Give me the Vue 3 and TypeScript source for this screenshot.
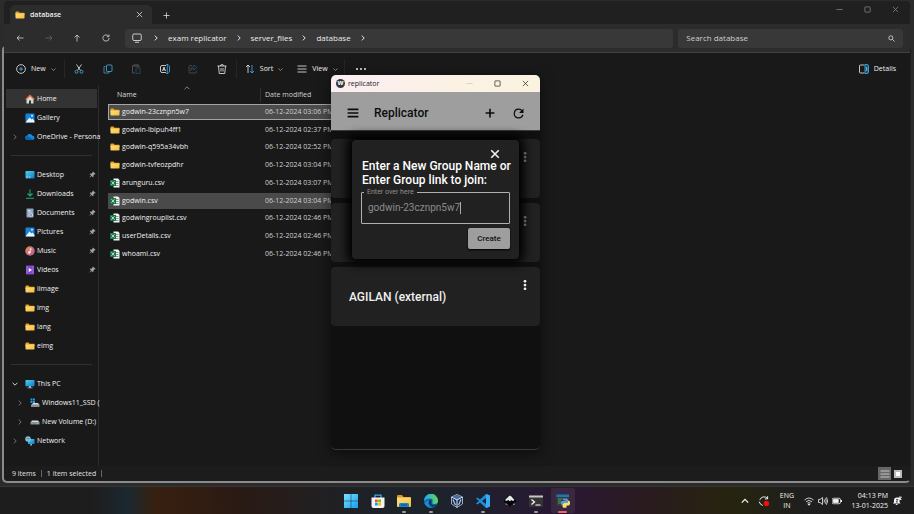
<script setup lang="ts">
import { ref } from 'vue'

interface Place {
  label: string
  icon: string
  arrow?: 'right' | 'down'
  pinned?: boolean
  nested?: boolean
  active?: boolean
}

interface FileRow {
  name: string
  icon: string
  date: string
  state?: string
}

const quick: Place[] = [
  { label: 'Home', icon: 'home', active: true },
  { label: 'Gallery', icon: 'picture' },
  { label: 'OneDrive - Persona', icon: 'cloud', arrow: 'right' },
]

const pinned: Place[] = [
  { label: 'Desktop', icon: 'desktop', pinned: true },
  { label: 'Downloads', icon: 'download', pinned: true },
  { label: 'Documents', icon: 'document', pinned: true },
  { label: 'Pictures', icon: 'picture', pinned: true },
  { label: 'Music', icon: 'music', pinned: true },
  { label: 'Videos', icon: 'video', pinned: true },
  { label: 'iimage', icon: 'folder' },
  { label: 'img', icon: 'folder' },
  { label: 'lang', icon: 'folder' },
  { label: 'eimg', icon: 'folder' },
]

const devices: Place[] = [
  { label: 'This PC', icon: 'pc', arrow: 'down' },
  { label: 'Windows11_SSD (', icon: 'windrive', arrow: 'right', nested: true },
  { label: 'New Volume (D:)', icon: 'drive', arrow: 'right', nested: true },
  { label: 'Network', icon: 'network', arrow: 'right' },
]

const groups = [quick, pinned, devices]

const files: FileRow[] = [
  { name: 'godwin-23cznpn5w7', icon: 'folder', date: '06-12-2024 03:06 PM', state: 'selected' },
  { name: 'godwin-lbipuh4ff1', icon: 'folder', date: '06-12-2024 02:37 PM' },
  { name: 'godwin-q595a34vbh', icon: 'folder', date: '06-12-2024 02:52 PM' },
  { name: 'godwin-tvfeozpdhr', icon: 'folder', date: '06-12-2024 03:04 PM' },
  { name: 'arunguru.csv', icon: 'csv', date: '06-12-2024 03:07 PM' },
  { name: 'godwin.csv', icon: 'csv', date: '06-12-2024 03:04 PM', state: 'hovered' },
  { name: 'godwingrouplist.csv', icon: 'csv', date: '06-12-2024 02:46 PM' },
  { name: 'userDetails.csv', icon: 'csv', date: '06-12-2024 02:46 PM' },
  { name: 'whoami.csv', icon: 'csv', date: '06-12-2024 02:46 PM' },
]

const crumbs = ['exam replicator', 'server_files', 'database']

const navButtons = [
  { label: 'Back', icon: 'back' },
  { label: 'Forward', icon: 'forward' },
  { label: 'Up', icon: 'up' },
  { label: 'Refresh', icon: 'refresh' },
]

const tools = [
  { label: 'Cut', icon: 'cut' },
  { label: 'Copy', icon: 'copy' },
  { label: 'Paste', icon: 'paste' },
  { label: 'Rename', icon: 'rename' },
  { label: 'Share', icon: 'share' },
  { label: 'Delete', icon: 'trash' },
]

const apps = [
  { label: 'Start', icon: 'start', run: '' },
  { label: 'Microsoft Store', icon: 'store', run: '' },
  { label: 'File Explorer', icon: 'explorer', run: 'open' },
  { label: 'Edge', icon: 'edge', run: 'open' },
  { label: 'VirtualBox', icon: 'vbox', run: '' },
  { label: 'Visual Studio Code', icon: 'code', run: 'open' },
  { label: 'Inkscape', icon: 'ink', run: '' },
  { label: 'Terminal', icon: 'terminal', run: 'open' },
  { label: 'Python', icon: 'python', run: 'front' },
]

const cards = ['', '', 'AGILAN (external)']
const groupName = ref('godwin-23cznpn5w7')
const search = ref('')
</script>

<template>
  <svg class="sprite" aria-hidden="true">
    <defs>
      <linearGradient id="gFolder" x1="0" y1="0" x2="1" y2="1"><stop offset="0" stop-color="#ffe08a" /><stop offset="1" stop-color="#f8bd35" /></linearGradient>
      <linearGradient id="gBlue" x1="0" y1="0" x2="1" y2="1"><stop offset="0" stop-color="#48d3ee" /><stop offset="1" stop-color="#1579c4" /></linearGradient>
      <linearGradient id="gWin" x1="0" y1="0" x2="1" y2="1"><stop offset="0" stop-color="#7be0ff" /><stop offset="1" stop-color="#109ff0" /></linearGradient>
      <linearGradient id="gMusic" x1="0" y1="0" x2="1" y2="1"><stop offset="0" stop-color="#e88a5a" /><stop offset="1" stop-color="#b75a92" /></linearGradient>
      <linearGradient id="gEdge" x1="0" y1="0" x2="1" y2="0"><stop offset="0" stop-color="#1fa7e8" /><stop offset="1" stop-color="#62d65b" /></linearGradient>
    </defs>
    <symbol id="i-folder" viewBox="0 0 20 16"><path d="M1 2.500Q1 1 2.500 1H7l2 2.500h9q1 0 1 1V8H1z" fill="#e8a317" /><path d="M1 5h18v8.500q0 1.500-1.500 1.500h-15Q1 15 1 13.500z" fill="url(#gFolder)" /></symbol>
    <symbol id="i-csv" viewBox="0 0 20 20"><path d="M7 1h9l3 3v15H7z" fill="#f2f5f2" /><path d="M10 6h7v2h-7zM12 10h5v2h-5zM12 14h5v2h-5z" fill="#7aa68c" /><path d="M0 4h12v12H0z" fill="#187345" /><path d="M3 6.500l6 7M9 6.500l-6 7" stroke="#dff3e6" stroke-width="1.600" /></symbol>
    <symbol id="i-home" viewBox="0 0 20 20"><path d="M3 9l7-6 7 6v10h-5v-6H8v6H3z" fill="#d5d8dc" /><path d="M1.500 11L10 3l8.500 8" fill="none" stroke="#e2703a" stroke-width="3" stroke-linejoin="round" /></symbol>
    <symbol id="i-picture" viewBox="0 0 20 20"><rect x="1" y="1" width="18" height="18" rx="2" fill="#1683dc" /><path d="M1 19l8-10 4 4 2-2 4 5v3z" fill="#eaf6ff" /><circle cx="14" cy="5.500" r="1.800" fill="#eaf6ff" /></symbol>
    <symbol id="i-cloud" viewBox="0 0 20 20"><path d="M5 16a4.500 4.500 0 01-.5-9A6 6 0 0115 7.500 4.300 4.300 0 0115.500 16z" fill="#168be0" /><path d="M3 8l6 2 8 5-1.500 1H5A4.500 4.500 0 013 8z" fill="#0866b5" /></symbol>
    <symbol id="i-desktop" viewBox="0 0 20 18"><rect x="1" y="1" width="18" height="15" rx="1.500" fill="url(#gBlue)" /><path d="M3 13h3M8 13h3" stroke="#d9f7ff" stroke-width="1.500" /></symbol>
    <symbol id="i-download" viewBox="0 0 20 20"><path d="M10 1v13M5 9l5 5 5-5M2 18.500h16" fill="none" stroke="#23a67f" stroke-width="2.200" /></symbol>
    <symbol id="i-document" viewBox="0 0 20 20"><rect x="3" y="1" width="14" height="18" rx="1.500" fill="#8ca3bb" /><path d="M6 5h5M6 8h7M8 12h7v4H8z" stroke="#e8eef4" stroke-width="1.500" fill="#587795" /></symbol>
    <symbol id="i-music" viewBox="0 0 20 20"><circle cx="10" cy="10" r="9.500" fill="url(#gMusic)" /><circle cx="8.500" cy="13" r="2.300" fill="#fff" /><path d="M10.500 13V5l3 2" stroke="#fff" stroke-width="1.600" fill="none" /></symbol>
    <symbol id="i-video" viewBox="0 0 20 20"><rect x="2" y="1" width="16" height="18" rx="1.500" fill="#8447cf" /><path d="M4 3v14M16 3v14" stroke="#c9a4f2" stroke-width="1.600" stroke-dasharray="2 2" /><path d="M7.500 6l6.500 4-6.500 4z" fill="#fff" /></symbol>
    <symbol id="i-pc" viewBox="0 0 20 18"><rect x="1" y="1" width="18" height="12.500" rx="1" fill="url(#gBlue)" /><path d="M8 13h4v3h3v1.500H5V16h3z" fill="#8eb9cf" /></symbol>
    <symbol id="i-drive" viewBox="0 0 20 20"><path d="M4 7h12l3 4H1z" fill="#d7dadd" /><rect x="1" y="10" width="18" height="5" rx="1" fill="#8b8f92" /><path d="M13 12.500h4" stroke="#87ef9b" stroke-width="1.400" /></symbol>
    <symbol id="i-windrive" viewBox="0 0 20 20"><path d="M1 1h4v4H1zM6 1h4v4H6zM1 6h4v4H1zM6 6h4v4H6z" fill="#1c9cf0" /><path d="M6 10h10l3 4H3z" fill="#d7dadd" /><rect x="2" y="13" width="17" height="5" rx="1" fill="#8b8f92" /></symbol>
    <symbol id="i-network" viewBox="0 0 20 20"><rect x="6" y="6" width="13" height="10" rx="1" fill="url(#gBlue)" /><path d="M11 16h3v3h-4z" fill="#8eb9cf" /><circle cx="6" cy="6" r="5.500" fill="#8fc5de" /><path d="M2 5h8M6 1v10" stroke="#3f7ea0" /></symbol>
    <symbol id="i-pin" viewBox="0 0 16 16"><path d="M9 1l6 6-1.500 1-1-.3-2.500 2.500.3 3L9 14.500 5.800 11.300 2 15l-1-1 3.800-3.800L1.500 7l1.300-1.300 3 .3 2.500-2.500L8 2.300z" fill="#9ba4ad" /></symbol>
    <symbol id="i-back" viewBox="0 0 16 16"><path d="M15 8H2M7 3L2 8l5 5" /></symbol>
    <symbol id="i-forward" viewBox="0 0 16 16"><path d="M1 8h13M9 3l5 5-5 5" /></symbol>
    <symbol id="i-up" viewBox="0 0 16 16"><path d="M8 15V2M3 7l5-5 5 5" /></symbol>
    <symbol id="i-refresh" viewBox="0 0 16 16"><path d="M13.500 5A6.300 6.300 0 108 14.300 6.300 6.300 0 0014.300 8M14 1v4.300H9.700" /></symbol>
    <symbol id="i-monitor" viewBox="0 0 20 20"><rect x="1.500" y="2" width="17" height="13" rx="2.500" /><path d="M6 18.500h8" /></symbol>
    <symbol id="i-right" viewBox="0 0 10 10"><path d="M3 1l4 4-4 4" /></symbol>
    <symbol id="i-down" viewBox="0 0 10 10"><path d="M1 3l4 4 4-4" /></symbol>
    <symbol id="i-caret" viewBox="0 0 10 10"><path d="M1 7l4-4 4 4" /></symbol>
    <symbol id="i-close" viewBox="0 0 16 16"><path d="M2 2l12 12M14 2L2 14" /></symbol>
    <symbol id="i-plus" viewBox="0 0 16 16"><path d="M8 1v14M1 8h14" /></symbol>
    <symbol id="i-min" viewBox="0 0 16 16"><path d="M1 8h14" /></symbol>
    <symbol id="i-max" viewBox="0 0 16 16"><rect x="2" y="2" width="12" height="12" rx="1" /></symbol>
    <symbol id="i-search" viewBox="0 0 16 16"><circle cx="6.500" cy="6.500" r="4.700" /><path d="M10 10l5 5" /></symbol>
    <symbol id="i-new" viewBox="0 0 20 20"><circle cx="10" cy="10" r="8.700" /><path d="M10 6v8M6 10h8" stroke="#55b9ee" /></symbol>
    <symbol id="i-cut" viewBox="0 0 20 20"><path d="M5 1l8 12M15 1L7 13" /><g stroke="#45b3ec"><circle cx="5" cy="15.500" r="3" /><circle cx="15" cy="15.500" r="3" /></g></symbol>
    <symbol id="i-copy" viewBox="0 0 20 20"><path d="M5 5H2v13h10v-3" stroke="#4a93bd" /><rect x="7" y="2" width="11" height="13" rx="1.500" stroke="#45b3ec" /></symbol>
    <symbol id="i-paste" viewBox="0 0 20 20"><path d="M8 18H3V3h3M14 3h2v4M6 1.500h8v3H6z" stroke="#5c5c5c" /><rect x="10" y="8" width="8" height="11" rx="1" stroke="#2b5369" /></symbol>
    <symbol id="i-rename" viewBox="0 0 20 20"><path d="M12 3H4Q1 3 1 6v8q0 3 3 3h8" /><path d="M17 3q2 0 2 3v8q0 3-2 3M14.500 1v18M12.500 1h4M12.500 19h4" stroke="#45b3ec" /><path d="M5 14L8 6l3 8M6 11.500h4" /></symbol>
    <symbol id="i-share" viewBox="0 0 20 20"><path d="M8 3H4Q2 3 2 5v11q0 2 2 2h11q2 0 2-2v-2" stroke="#505050" /><path d="M12 2l6 5-6 5V9q-5 0-7 4 0-8 7-8z" stroke="#2b5369" /></symbol>
    <symbol id="i-trash" viewBox="0 0 20 20"><path d="M1 4h18M7 4q0-3 3-3t3 3M3 4l1.500 15h11L17 4M8 8v7M12 8v7" /></symbol>
    <symbol id="i-sort" viewBox="0 0 20 20"><path d="M6 18V2M2 6l4-4 4 4" /><path d="M14 2v16M10 14l4 4 4-4" stroke="#45b3ec" /></symbol>
    <symbol id="i-lines" viewBox="0 0 20 20"><path d="M1 4h18M1 10h18M1 16h18" /></symbol>
    <symbol id="i-details" viewBox="0 0 20 20"><path d="M11 2H3Q1 2 1 4v12q0 2 2 2h8" /><path d="M12 1h4q3 0 3 3v12q0 3-3 3h-4z" fill="#174d6c" stroke="#45b3ec" /><path d="M15.500 6v8" stroke="#9edcff" /></symbol>
    <symbol id="i-more" viewBox="0 0 20 20"><g fill="currentColor" stroke="none"><circle cx="2" cy="10" r="2" /><circle cx="10" cy="10" r="2" /><circle cx="18" cy="10" r="2" /></g></symbol>
    <symbol id="i-kebab" viewBox="0 0 24 24"><g fill="currentColor" stroke="none"><circle cx="12" cy="3" r="3.300" /><circle cx="12" cy="12" r="3.300" /><circle cx="12" cy="21" r="3.300" /></g></symbol>
    <symbol id="i-reload" viewBox="0 0 24 24"><path d="M17.650 6.350A7.960 7.960 0 0012 4a8 8 0 108 10h-2.100A6 6 0 1112 6c1.660 0 3.140.690 4.220 1.780L13 11h7V4z" fill="currentColor" stroke="none" /></symbol>
    <symbol id="i-start" viewBox="0 0 28 28"><path d="M0 0h13.500v13.500H0zM14.500 0H28v13.500H14.500zM0 14.500h13.500V28H0zM14.500 14.500H28V28H14.500z" fill="url(#gWin)" /></symbol>
    <symbol id="i-store" viewBox="0 0 28 28"><path d="M8 8V2h12v6" fill="none" stroke="#35aee8" stroke-width="2.500" /><path d="M1 7h26v17q0 4-4 4H5q-4 0-4-4z" fill="#f3f3f3" /><path d="M8 11h5.500v5.500H8z" fill="#f25022" /><path d="M14.500 11H20v5.500h-5.500z" fill="#7fba00" /><path d="M8 17.500h5.500V23H8z" fill="#00a4ef" /><path d="M14.500 17.500H20V23h-5.500z" fill="#ffb900" /></symbol>
    <symbol id="i-explorer" viewBox="0 0 28 28"><path d="M0 4q0-2 2-2h8l3 4h13q2 0 2 2v6H0z" fill="#dc9814" /><path d="M0 7h28v17q0 2-2 2H2q-2 0-2-2z" fill="url(#gFolder)" /><path d="M4 26v-5q0-3 3-3h14q3 0 3 3v5z" fill="#1685c9" /><path d="M8 22h12" stroke="#0b4f87" stroke-width="2" /></symbol>
    <symbol id="i-edge" viewBox="0 0 28 28"><circle cx="14" cy="14" r="14" fill="#0c64b6" /><path d="M0 14a14 14 0 0128-1q0 7-7 7-6 0-4-4 2-7-5-7Q4 9 0 14z" fill="url(#gEdge)" /><path d="M10 13q-2 9 6 12 6 1 10-4-12 4-12-5l2-3z" fill="#16304a" /><path d="M10 13q-3 10 7 14-11 2-16-8 2-7 9-6z" fill="#138bd7" /></symbol>
    <symbol id="i-vbox" viewBox="0 0 28 28"><path d="M14 1l11 5v14l-11 7L3 20V6z" fill="#14294d" stroke="#c5d4e6" stroke-width="1.500" /><path d="M4 6l10 6 10-6-10-4z" fill="#4b6f9f" /><path d="M3 6l11 6 11-6M14 12v15" fill="none" stroke="#dde6f0" stroke-width="2" /><path d="M6 11l3 7 2 4M22 11l-3 7-2 4" fill="none" stroke="#b5c9e2" stroke-width="2.500" /></symbol>
    <symbol id="i-code" viewBox="0 0 28 28"><path d="M20 0l8 3v22l-8 3L8 17l-5 4-3-2 6-5-6-5 3-2 5 4zM20 8l-8 6 8 6z" fill="#1690dc" fill-rule="evenodd" /><path d="M20 0l8 3v22l-8 3z" fill="#36aaf2" /></symbol>
    <symbol id="i-ink" viewBox="0 0 28 28"><path d="M14 2q2 0 4 2l8 9q2 3-1 4l-6 1 2 3-5 1-2 4-3-4-5-1 3-3-6-1q-3-1-1-4l8-9q2-2 4-2z" fill="#050505" /><path d="M14 3q1 0 3 2l6 7-3 2-4-2-2 3-3-3-5 2-2-2 7-7q2-2 3-2z" fill="#e5e9ec" /><path d="M5 20l4 1M20 21l4-1" stroke="#ccc" stroke-width="1.500" /></symbol>
    <symbol id="i-terminal" viewBox="0 0 28 28"><rect y="3" width="28" height="23" rx="2" fill="#343434" /><path d="M0 3h28v4H0z" fill="#c5c5c5" /><path d="M5 11l6 5-6 5M13 22h10" fill="none" stroke="#fff" stroke-width="2.400" /></symbol>
    <symbol id="i-python" viewBox="0 0 28 28"><rect x="1" y="1" width="25" height="23" fill="#353b40" /><path d="M1 1h25v5H1z" fill="#1e76b5" /><path d="M4 10h8M4 14h6M4 18h8" stroke="#4aa254" stroke-width="2" /><path d="M13 9h8q3 0 3 4v5h-8q-3 0-3 4h-2q-3-8 2-8h7v-1h-5z" fill="#5b9fd4" /><path d="M24 13q5 0 4 7-1 3-4 3h-3v4q-8 2-8-2v-4q0-3 4-3h7z" fill="#ffdf6b" /></symbol>
    <symbol id="i-wifi" viewBox="0 0 20 20"><path d="M1 8q9-8 18 0M4 11.500q6-5.500 12 0M7 14.500q3-3 6 0" /><circle cx="10" cy="17" r="1.300" fill="currentColor" /></symbol>
    <symbol id="i-sound" viewBox="0 0 20 20"><path d="M1 7h3l5-4v14l-5-4H1zM12 7q2 3 0 6M14.500 4.500q4 5.500 0 11M17 2.500q4.500 7.500 0 15" /></symbol>
    <symbol id="i-battery" viewBox="0 0 20 20"><rect x="0" y="4.500" width="17" height="11" rx="3" /><path d="M2.500 7h10v6h-10z" fill="currentColor" /><path d="M19 8v4" stroke-width="2" /></symbol>
    <symbol id="i-sync" viewBox="0 0 20 20"><path d="M16 6A7.500 7.500 0 003 8M16 2v4.500h-4.500M2 11q1 5 6 6.500" /><circle cx="14" cy="14" r="4.500" fill="#f40f0f" stroke="none" /></symbol>
    <symbol id="i-bell" viewBox="0 0 20 20"><path d="M2 15l2-3V8q0-5 6-5h7v4q-2 0-2 2v3l2 3zM7 16q2 4 5 0z" fill="currentColor" stroke="none" /><path d="M8 7h4l-4 5h4" stroke="#333" /><path d="M14 2h5l-4 5h4" /></symbol>
  </svg>

  <div class="screen">
    <main class="workspace">
      <div class="behind"></div>
      <section class="explorer">
        <header class="tabs">
          <div class="tab">
            <svg class="ic s10"><use href="#i-folder" /></svg>
            <span class="tab-name">database</span>
            <button class="plain" aria-label="Close tab"><svg class="ic line s7"><use href="#i-close" /></svg></button>
          </div>
          <button class="plain add" aria-label="New tab"><svg class="ic line s7"><use href="#i-plus" /></svg></button>
          <div class="win-buttons">
            <button class="plain" aria-label="Minimise"><svg class="ic line s7"><use href="#i-min" /></svg></button>
            <button class="plain" aria-label="Maximise"><svg class="ic line s7"><use href="#i-max" /></svg></button>
            <button class="plain" aria-label="Close"><svg class="ic line s7"><use href="#i-close" /></svg></button>
          </div>
        </header>

        <nav class="navbar">
          <div class="nav-buttons">
            <button v-for="b in navButtons" :key="b.icon" class="plain" :class="b.icon" :aria-label="b.label">
              <svg class="ic line s8"><use :href="'#i-' + b.icon" /></svg>
            </button>
          </div>
          <div class="address">
            <svg class="ic line s10 device"><use href="#i-monitor" /></svg>
            <svg class="ic line s6"><use href="#i-right" /></svg>
            <template v-for="c in crumbs" :key="c">
              <a href="#">{{ c }}</a>
              <svg class="ic line s6"><use href="#i-right" /></svg>
            </template>
          </div>
          <label class="search">
            <input v-model="search" type="text" placeholder="Search database" aria-label="Search database" />
            <svg class="ic line s7"><use href="#i-search" /></svg>
          </label>
        </nav>

        <div class="toolbar">
          <button class="plain menu new"><svg class="ic line s10"><use href="#i-new" /></svg>New<svg class="ic line s5"><use href="#i-down" /></svg></button>
          <div class="tools">
            <button v-for="t in tools" :key="t.icon" class="plain" :aria-label="t.label">
              <svg class="ic line s10"><use :href="'#i-' + t.icon" /></svg>
            </button>
          </div>
          <button class="plain menu sort"><svg class="ic line s10"><use href="#i-sort" /></svg>Sort<svg class="ic line s5"><use href="#i-down" /></svg></button>
          <button class="plain menu view"><svg class="ic line s10"><use href="#i-lines" /></svg>View<svg class="ic line s5"><use href="#i-down" /></svg></button>
          <button class="plain more" aria-label="See more"><svg class="ic line s10"><use href="#i-more" /></svg></button>
          <button class="plain menu details"><svg class="ic line s10"><use href="#i-details" /></svg>Details</button>
        </div>

        <div class="body">
          <aside class="places">
            <ul v-for="(g, i) in groups" :key="i">
              <li v-for="p in g" :key="p.label" :class="{ active: p.active, nested: p.nested }">
                <span class="arrow"><svg v-if="p.arrow" class="ic line s6" :class="p.arrow"><use :href="'#i-' + p.arrow" /></svg></span>
                <svg class="ic s10"><use :href="'#i-' + p.icon" /></svg>
                <span class="place">{{ p.label }}</span>
                <svg v-if="p.pinned" class="ic s7"><use href="#i-pin" /></svg>
              </li>
            </ul>
          </aside>

          <div class="files">
            <table>
              <thead>
                <tr>
                  <th class="name">Name<svg class="ic line s6 asc"><use href="#i-caret" /></svg></th>
                  <th class="date">Date modified</th>
                </tr>
              </thead>
              <tbody>
                <tr v-for="f in files" :key="f.name" :class="f.state">
                  <td class="name"><span class="file"><svg class="ic s10"><use :href="'#i-' + f.icon" /></svg>{{ f.name }}</span></td>
                  <td class="date">{{ f.date }}</td>
                </tr>
              </tbody>
            </table>
          </div>
        </div>

        <footer class="status">
          <span>9 items</span>
          <span>1 item selected</span>
          <div class="modes">
            <button class="plain on" aria-label="Details view"><svg class="ic line s10"><use href="#i-lines" /></svg></button>
            <button class="plain" aria-label="Large icons"><i class="thumb"></i></button>
          </div>
        </footer>
      </section>

      <section class="replicator">
        <header class="titlebar">
          <span class="logo">w</span>
          <span class="title">replicator</span>
          <button class="plain dim" aria-label="Minimise"><svg class="ic line s7"><use href="#i-min" /></svg></button>
          <button class="plain" aria-label="Maximise"><svg class="ic line s7"><use href="#i-max" /></svg></button>
          <button class="plain" aria-label="Close"><svg class="ic line s7"><use href="#i-close" /></svg></button>
        </header>
        <div class="appbar">
          <button class="plain" aria-label="Menu"><svg class="ic line bold s12"><use href="#i-lines" /></svg></button>
          <h1>Replicator</h1>
          <button class="plain" aria-label="Add"><svg class="ic line bold s10"><use href="#i-plus" /></svg></button>
          <button class="plain" aria-label="Reload"><svg class="ic s15"><use href="#i-reload" /></svg></button>
        </div>
        <div class="cards">
          <article v-for="(c, i) in cards" :key="i" class="card" :class="{ shaded: i < 2 }">
            <h2>{{ c }}</h2>
            <button class="plain" aria-label="Options"><svg class="ic s10"><use href="#i-kebab" /></svg></button>
          </article>
        </div>

        <form class="dialog" @submit.prevent>
          <button type="button" class="plain dismiss" aria-label="Close dialog"><svg class="ic line bold s10"><use href="#i-close" /></svg></button>
          <p>Enter a New Group Name or<br />Enter Group link to join:</p>
          <div class="field">
            <label for="group">Enter over here</label>
            <input id="group" v-model="groupName" type="text" />
            <i class="cursor"></i>
          </div>
          <button class="create">Create</button>
        </form>
      </section>
    </main>

    <footer class="taskbar">
      <div class="apps">
        <button v-for="a in apps" :key="a.icon" class="plain app" :class="a.run" :aria-label="a.label">
          <svg class="ic s14"><use :href="'#i-' + a.icon" /></svg>
        </button>
      </div>
      <div class="tray">
        <svg class="ic line s8"><use href="#i-caret" /></svg>
        <svg class="ic line s12 sync"><use href="#i-sync" /></svg>
        <div class="lang">ENG<br />IN</div>
        <div class="net">
          <svg class="ic line s10"><use href="#i-wifi" /></svg>
          <svg class="ic line s10"><use href="#i-sound" /></svg>
          <svg class="ic line s10"><use href="#i-battery" /></svg>
        </div>
        <div class="clock">04:13 PM<br />13-01-2025</div>
        <svg class="ic line s10"><use href="#i-bell" /></svg>
      </div>
    </footer>
  </div>
</template>

<style>
html,
body {
  margin: 0;
  background: #1d1d1d;
}
</style>

<style scoped>
.sprite { position: absolute; width: 0; height: 0; }
.screen {
  box-sizing: border-box;
  min-height: 100vh;
  display: flex;
  flex-direction: column;
  overflow: hidden;
  background: #2b2b2b;
  color: #f0f0f0;
  font: 7px/10px "Open Sans", "Noto Sans", sans-serif;
}
.screen * { box-sizing: border-box; }
.ic { display: block; flex: none; overflow: visible; }
.line { fill: none; stroke: currentColor; stroke-width: 1.6; }
.bold { stroke-width: 2.6; }
.s5 { width: 5px; height: 5px; }
.s6 { width: 6px; height: 6px; }
.s7 { width: 7px; height: 7px; }
.s8 { width: 8px; height: 8px; }
.s10 { width: 10px; height: 10px; }
.s12 { width: 12px; height: 12px; }
.s14 { width: 14px; height: 14px; }
.s15 { width: 15px; height: 15px; }
.plain {
  display: flex;
  align-items: center;
  justify-content: center;
  border: 0;
  padding: 0;
  background: none;
  color: inherit;
  font: inherit;
}

.workspace { flex: 1; display: flex; position: relative; padding: 1px 4px 5px; }
.behind {
  position: absolute;
  inset: 45px 3px 3px 2px;
  border: 2px solid #8b8b8b;
  border-top-color: #3a3a3a;
  border-right-color: #202020;
  border-radius: 5px;
}
.explorer {
  position: relative;
  flex: 1;
  display: flex;
  flex-direction: column;
  border-radius: 5px;
  overflow: hidden;
  background: #191919;
}

.tabs { display: flex; align-items: flex-end; height: 23px; background: #202020; }
.tab {
  display: flex;
  align-items: center;
  gap: 5px;
  width: 142px;
  height: 19px;
  margin-left: 6px;
  padding: 0 9px 0 5px;
  border-radius: 5px 5px 0 0;
  background: #2c2c2c;
}
.tab-name { flex: 1; font-weight: 600; }
.add { width: 28px; height: 18px; }
.win-buttons { display: flex; align-self: flex-start; margin-left: auto; padding-right: 1px; color: #8d8d8d; }
.win-buttons button { width: 28px; height: 17px; }

.navbar {
  display: grid;
  grid-template-columns: 114px 549fr 225fr;
  align-items: center;
  gap: 5px;
  height: 29px;
  padding: 0 7px 0 2px;
  border-bottom: 1px solid #404040;
  background: #2c2c2c;
}
.nav-buttons { display: flex; }
.nav-buttons button { flex: 1; height: 19px; color: #d4d4d4; }
.nav-buttons .forward { color: #666; }
.address, .search { display: flex; align-items: center; height: 19px; border-radius: 3px; background: #383838; font-size: 8px; }
.address { gap: 9px; padding-left: 7px; }
.address a { color: #ececec; text-decoration: none; }
.device { margin-right: 2px; }
.search { padding: 0 8px; }
.search input { flex: 1; min-width: 0; border: 0; padding: 0; background: none; color: inherit; font: inherit; outline: 0; }
.search input::placeholder { color: #cfcfcf; opacity: 1; }

.toolbar { display: flex; align-items: center; height: 32px; padding: 0 14px 0 12px; }
.menu { gap: 5px; height: 18px; }
.menu .s5 { color: #999; }
.new { width: 48px; justify-content: flex-start; }
.tools { display: flex; width: 173px; border: solid #262626; border-width: 0 1px; }
.tools button { flex: 1; height: 18px; }
.sort { width: 54px; }
.view { width: 54px; border-right: 1px solid #262626; }
.more { width: 32px; height: 18px; }
.details { margin-left: auto; }

.body { flex: 1; display: flex; }
.places { width: 95px; padding: 4px 1px 0 2px; border-right: 1px solid #2d2d2d; }
.places ul { list-style: none; margin: 0; padding: 0; }
.places ul + ul::before { content: ""; display: block; height: 19px; margin: 0 5px; background: linear-gradient(#303030, #303030) center / 100% 1px no-repeat; }
.places li { display: flex; align-items: center; gap: 2px; height: 19px; padding-right: 1px; }
.places li.active { background: #333; }
.places .nested { padding-left: 5px; }
.arrow { flex: none; display: flex; justify-content: center; width: 17px; color: #777; }
.arrow .down { color: #ddd; }
.place { flex: 1; white-space: nowrap; }

.files { flex: 1; min-width: 0; padding: 1px 0 0 9px; }
table { width: 345px; height: 178px; table-layout: fixed; border-collapse: separate; border-spacing: 0 2px; }
th, td { padding: 0; text-align: left; font-weight: 400; white-space: nowrap; }
th { height: 14px; position: relative; color: #dedede; }
th.name { width: 153px; padding-left: 9px; border-right: 1px solid #303030; }
.asc { position: absolute; left: 76px; top: -3px; color: #888; }
.date { padding-left: 4px; color: #d0d0d0; }
.file { display: flex; align-items: center; gap: 2px; padding-left: 2px; }
.selected td { background: #4d4d4d; box-shadow: inset 0 1px #a5a5a5, inset 0 -1px #a5a5a5; }
.selected td.name { box-shadow: inset 0 1px #a5a5a5, inset 0 -1px #a5a5a5, inset 1px 0 #a5a5a5; }
.hovered td { background: #4a4a4a; }

.status { display: flex; align-items: center; height: 15px; padding: 0 6px 0 8px; background: #1c1c1c; color: #e0e0e0; }
.status span { padding-right: 5px; margin-right: 5px; border-right: 1px solid #666; line-height: 7px; }
.modes { display: flex; margin-left: auto; }
.modes button { width: 13px; height: 13px; }
.modes .on { background: #666; }
.thumb { width: 8px; height: 8px; border: 2px solid #bbb; background: #fff; }

.replicator {
  position: absolute;
  left: 331px;
  top: 75px;
  width: 209px;
  height: 375px;
  display: flex;
  flex-direction: column;
  border: solid #3b3b3b;
  border-width: 0 0 1px;
  border-radius: 5px;
  overflow: hidden;
  background: #101010;
  box-shadow: 0 3px 14px rgba(0, 0, 0, 0.55);
  font-family: Roboto, sans-serif;
}
.titlebar {
  display: flex;
  align-items: center;
  height: 17px;
  padding: 0 1px 0 5px;
  background: linear-gradient(90deg, #fbeef3, #fbf2e4 60%, #faf3df);
  color: #222;
  font-family: "Open Sans", sans-serif;
}
.logo { width: 9px; height: 9px; border-radius: 5px; background: #333b3b; color: #fff; font-weight: 700; line-height: 7px; text-align: center; }
.title { flex: 1; padding-left: 3px; }
.titlebar button { width: 28px; height: 17px; }
.titlebar .dim { color: #cfc6c4; }
.appbar { display: flex; align-items: center; height: 39px; padding: 4px 7px 0 16px; border-bottom: 1px solid #3b3b3b; background: #9e9e9e; color: #0c0c0c; }
.appbar h1 { flex: 1; margin: 0; padding-left: 15px; font-size: 12px; font-weight: 500; line-height: 16px; }
.appbar h1 ~ button { width: 29px; height: 29px; }
.cards { display: flex; flex-direction: column; gap: 5px; padding-top: 8px; }
.card { display: flex; align-items: center; height: 59px; padding: 0 10px 0 18px; border-radius: 4px; background: #212121; }
.card h2 { flex: 1; margin: 0; font-size: 12px; font-weight: 500; line-height: 16px; }
.card button { align-self: flex-start; padding-top: 13px; }
.card.shaded button { color: #a0a0a0; }

.dialog {
  position: absolute;
  left: 21px;
  right: 21px;
  top: 65px;
  display: flex;
  flex-direction: column;
  padding: 9px 9px 10px;
  border-radius: 4px;
  background: #212121;
  box-shadow: 0 0 10px 5px #000;
}
.dismiss { align-self: flex-end; margin-right: 10px; }
.dialog p { margin: 0 0 5px; padding-left: 1px; font-size: 12px; font-weight: 500; line-height: 14px; color: #fff; white-space: nowrap; }
.field { position: relative; display: flex; align-items: center; height: 32px; padding-left: 6px; border: 1px solid #b0b0b0; border-radius: 1px; }
.field label { position: absolute; left: 2px; top: -6px; padding: 0 3px; background: #212121; color: #8f8f8f; }
.field input { field-sizing: content; border: 0; padding: 0; outline: 0; background: none; color: #8c8c8c; font: 10px/14px Roboto, sans-serif; }
.cursor { width: 1px; height: 12px; background: #aaa; }
.create {
  align-self: flex-end;
  width: 42px;
  height: 21px;
  margin-top: 4px;
  border: 0;
  padding: 0;
  border-radius: 2px;
  background: #9e9e9e;
  color: #111;
  font: 500 8px/10px Roboto, sans-serif;
  box-shadow: 0 1px 2px #000;
}

.taskbar {
  display: grid;
  grid-template-columns: 1fr auto 1fr;
  align-items: center;
  height: 28px;
  border-top: 1px solid #353535;
  background: linear-gradient(90deg, #1d1d1d 10%, #1b2830 14%, #38200f 17%, #2a1a14 26%, #1e2126 38%, #1d222c 50%, #2a1733 62%, #2a1a20 70%, #26240f 80%, #1e1e1e 88%);
}
.apps { grid-column: 2; display: flex; gap: 2px; width: 236px; }
.app { flex: 1; height: 25px; position: relative; border-radius: 2px; }
.open::after, .front::after {
  content: "";
  position: absolute;
  bottom: 0;
  width: 4px;
  height: 2px;
  border-radius: 1px;
  background: #9a9a9a;
}
.front { background: rgba(255, 255, 255, 0.07); }
.front::after { width: 9px; background: #f2626b; }
.tray { display: flex; align-items: center; justify-content: flex-end; padding-right: 12px; color: #f4f4f4; }
.sync { margin-left: 9px; }
.lang { margin: 0 10px; text-align: center; }
.net { display: flex; gap: 4px; }
.clock { margin: 0 4px 0 8px; text-align: right; min-width: 38px; }
</style>
